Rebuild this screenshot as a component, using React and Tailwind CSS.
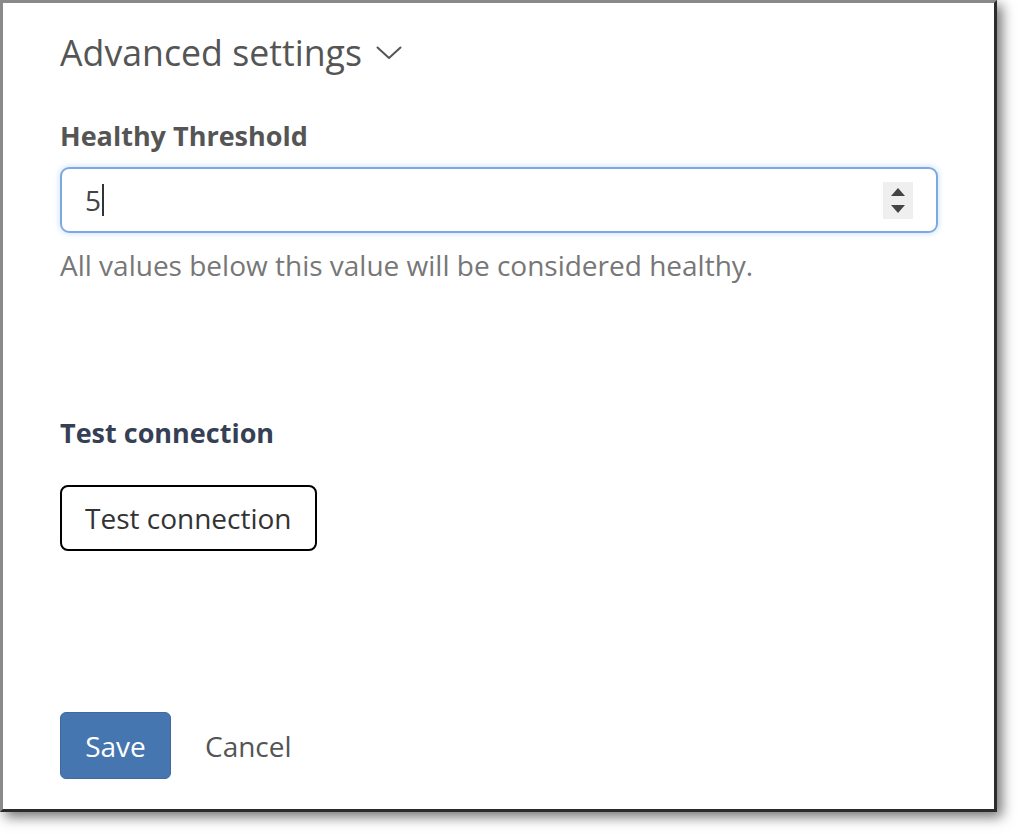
import React from 'react';

const font = { fontFamily: '"Open Sans", "Noto Sans", sans-serif' };

function Chevron() {
    return (
        <svg width="26" height="14" viewBox="0 0 26 14" fill="none" className="ml-[14px] mt-[2px]">
            <path d="M1.5 1.5 L13 12 L24.5 1.5" stroke="#555" strokeWidth="2" strokeLinecap="round" strokeLinejoin="round" />
        </svg>
    );
}

function Spinner() {
    return (
        <div className="flex flex-col items-center justify-center gap-[9px] w-[30px] h-[37px] bg-[#efefef]">
            <svg width="14" height="8" viewBox="0 0 14 8"><path d="M7 0 L14 8 L0 8 Z" fill="#444" /></svg>
            <svg width="14" height="8" viewBox="0 0 14 8"><path d="M0 0 L14 0 L7 8 Z" fill="#444" /></svg>
        </div>
    );
}

export default function App() {
    return (
        <div className="w-[1018px] h-[834px] bg-white" style={font}>
            <div className="w-[997px] h-[812px] bg-white border-[3px] border-l-[#8a8a8a] border-t-[#8a8a8a] border-r-[#2b2b2b] border-b-[#2b2b2b] shadow-[5px_5px_12px_rgba(0,0,0,0.55)] pl-[57px] pr-[56px] pt-[29px]">
                {/* ── Header ── */}
                <h2 className="flex items-center text-[35.7px] leading-[40px] text-[#555] font-normal">
                    Advanced settings
                    <Chevron />
                </h2>

                {/* ── Threshold ── */}
                <label className="block mt-[48px] text-[27px] leading-[32px] font-bold text-[#555]">Healthy Threshold</label>
                <div className="mt-[15px] h-[66px] w-[878px] flex items-center justify-between rounded-[9px] border-2 border-[#7aaae3] shadow-[0_0_6px_rgba(122,170,227,0.45)] pl-[23px] pr-[23px]">
                    <div className="flex items-center text-[28px] leading-[32px] text-[#444]">
                        5<span className="w-[2px] h-[32px] bg-[#333] ml-[1px]" />
                    </div>
                    <Spinner />
                </div>
                <p className="mt-[16px] text-[28px] leading-[32px] text-[#777]">All values below this value will be considered healthy.</p>

                {/* ── Test connection ── */}
                <h3 className="mt-[136px] text-[27px] leading-[32px] font-bold text-[#353f55]">Test connection</h3>
                <button className="mt-[36px] h-[66px] px-[23px] rounded-[8px] border-2 border-black bg-white text-[28px] text-[#333]">
                    Test connection
                </button>

                {/* ── Footer ── */}
                <div className="mt-[161px] flex items-center gap-[34px]">
                    <button className="h-[67px] w-[111px] rounded-[6px] bg-[#4676b0] border border-[#3d6aa1] text-white text-[28px]">Save</button>
                    <button className="text-[28px] text-[#555]">Cancel</button>
                </div>
            </div>
        </div>
    );
}
